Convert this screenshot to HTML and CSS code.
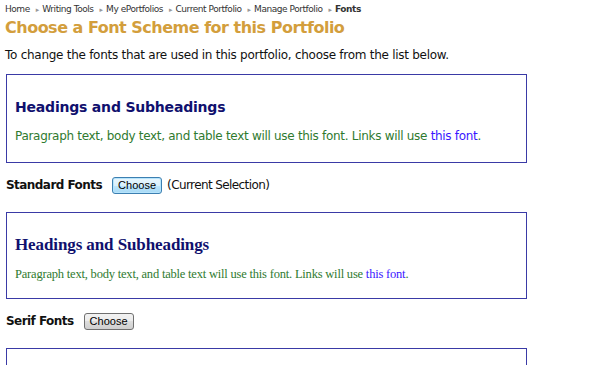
FILE: index.html
```html
<!DOCTYPE html>
<html lang="en">
<head>
  <meta charset="UTF-8" />
  <title>Fonts</title>
  <link rel="stylesheet" href="styles.css">
</head>
<body>
  <div class="breadcrumb">
    <a href="#">Home</a><span class="sep">&#9656;</span>
    <a href="#">Writing Tools</a><span class="sep">&#9656;</span>
    <a href="#">My ePortfolios</a><span class="sep">&#9656;</span>
    <a href="#">Current Portfolio</a><span class="sep">&#9656;</span>
    <a href="#">Manage Portfolio</a><span class="sep">&#9656;</span>
    <b>Fonts</b>
  </div>
  <h1 class="page-title">Choose a Font Scheme for this Portfolio</h1>
  <p class="intro">To change the fonts that are used in this portfolio, choose from the list below.</p>

  <div class="sample">
    <h2>Headings and Subheadings</h2>
    <p>Paragraph text, body text, and table text will use this font. Links will use <a href="#">this font</a>.</p>
  </div>
  <div class="choice">
    <b>Standard Fonts</b>
    <button class="choose current">Choose</button>
    <span>(Current Selection)</span>
  </div>

  <div class="sample serif">
    <h2>Headings and Subheadings</h2>
    <p>Paragraph text, body text, and table text will use this font. Links will use <a href="#">this font</a>.</p>
  </div>
  <div class="choice">
    <b>Serif Fonts</b>
    <button class="choose">Choose</button>
  </div>

  <div class="sample">
    <h2>&nbsp;</h2>
    <p>&nbsp;</p>
  </div>
</body>
</html>
```

FILE: styles.css
```css
body {
  font-family: 'DejaVu Sans', Verdana, sans-serif;
  font-size: 12px;
  color: #111;
  background-color: #fff;
  margin: 0;
  padding: 0 6px 0 5px;
}

.breadcrumb {
  font-size: 9px;
  letter-spacing: -0.45px;
  color: #333;
  padding-top: 4px;
  line-height: 11px;
}

.breadcrumb a {
  color: #333;
  text-decoration: none;
}

.breadcrumb .sep {
  color: #999;
  font-size: 7px;
  margin: 0 1px 0 6px;
}

.page-title {
  color: #d39e3c;
  font-size: 16px;
  letter-spacing: -0.5px;
  font-weight: bold;
  margin: 1px 0 0;
  line-height: 21px;
}

.intro {
  letter-spacing: -0.27px;
  margin: 9px 0 11px;
  line-height: 16px;
}

.sample {
  box-sizing: border-box;
  width: 521px;
  margin-left: 1px;
  border: 1px solid #3a3aa6;
  padding: 22px 8px 18px;
  color: #2f7a2f;
}

.sample h2 {
  color: #10106e;
  font-size: 14px;
  letter-spacing: -0.2px;
  margin: 0 0 11px;
  line-height: 20px;
}

.sample p {
  margin: 0;
  font-size: 12px;
  letter-spacing: -0.3px;
  line-height: 16px;
}

.sample a {
  color: #3a17ff;
  text-decoration: none;
}

.sample.serif {
  font-family: 'Liberation Serif', Georgia, serif;
  padding-bottom: 16px;
}

.sample.serif h2 {
  font-size: 17px;
  letter-spacing: -0.1px;
}

.sample.serif p {
  font-size: 12.5px;
  letter-spacing: -0.2px;
}

.choice {
  display: flex;
  align-items: center;
  margin: 13px 0 18px 1px;
  height: 18px;
}

.choice b {
  letter-spacing: -0.55px;
  margin-right: 10px;
}

.choice span {
  letter-spacing: -0.6px;
  margin-left: 5px;
}

.choose {
  font-family: 'Liberation Sans', Arial, sans-serif;
  font-size: 11px;
  height: 17px;
  width: 50px;
  padding: 0;
  border: 1px solid #707070;
  border-radius: 3px;
  background: linear-gradient(#f2f2f2, #ebebeb 50%, #dddddd 50%, #cfcfcf);
  color: #000;
}

.choose.current {
  border-color: #3c7fb1;
  background: linear-gradient(#eaf6fd, #d9f0fc 50%, #bee6fd 50%, #a7d9f5);
  box-shadow: inset 0 0 0 1px #b6e4fc;
}
```
